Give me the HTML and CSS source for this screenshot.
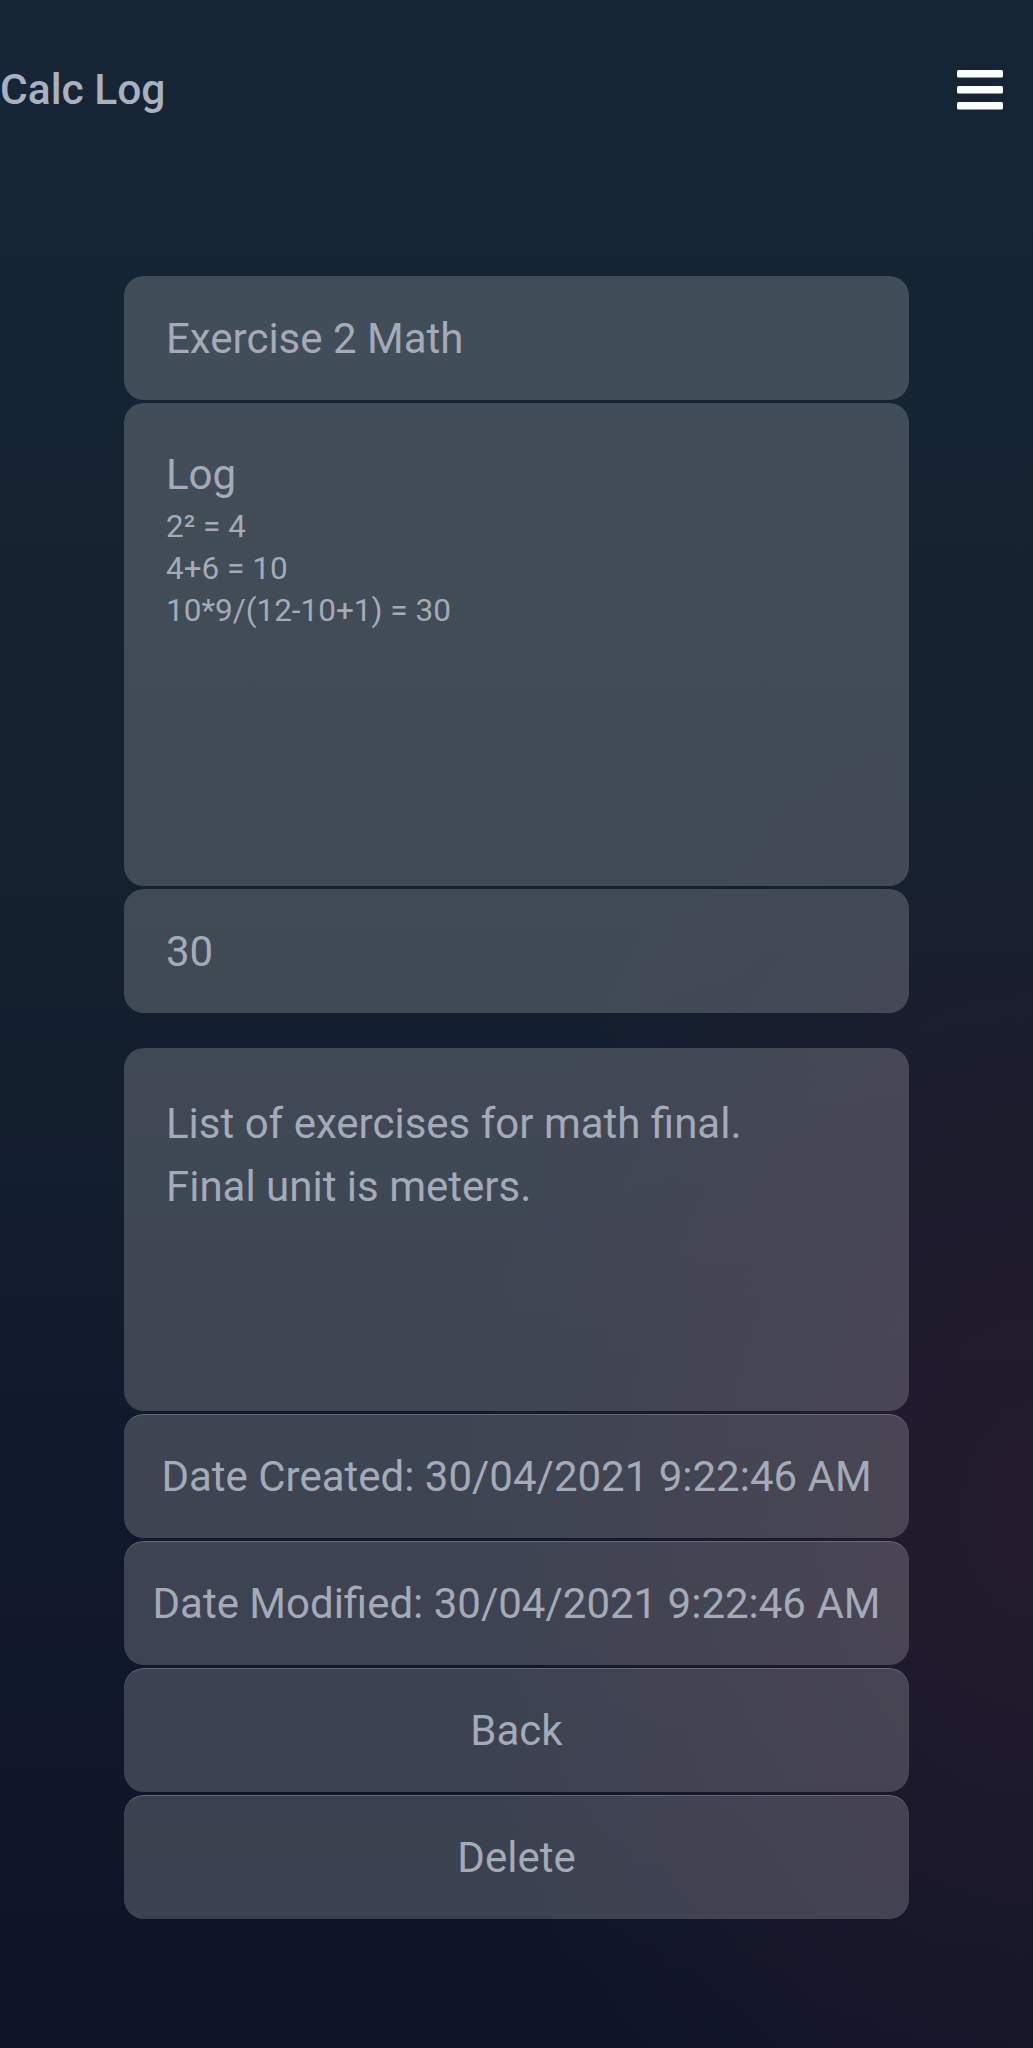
FILE: index.html
```html
<!DOCTYPE html>
<html lang="en">
<head>
<meta charset="utf-8">
<title>Calc Log</title>
<link rel="stylesheet" href="styles.css">
</head>
<body>
<header class="topbar">
  <h1 class="brand">Calc Log</h1>
  <button class="menu-btn" aria-label="Menu">
    <svg width="46" height="40" viewBox="0 0 46 40">
      <rect x="0" y="0" width="46" height="7.5" rx="1.5" fill="#ffffff"/>
      <rect x="0" y="16" width="46" height="7.5" rx="1.5" fill="#ffffff"/>
      <rect x="0" y="32" width="46" height="7.5" rx="1.5" fill="#ffffff"/>
    </svg>
  </button>
</header>
<main class="entry">
  <section class="group">
    <div class="card card-line">Exercise 2 Math</div>
    <div class="card card-log">
      <div class="log-label">Log</div>
      <div class="log-line">2² = 4</div>
      <div class="log-line">4+6 = 10</div>
      <div class="log-line">10*9/(12-10+1) = 30</div>
    </div>
    <div class="card card-line">30</div>
  </section>
  <section class="group group-lower">
    <div class="card card-notes">
      <div>List of exercises for math final.</div>
      <div>Final unit is meters.</div>
    </div>
    <div class="card card-line card-center card-edge">Date Created: 30/04/2021 9:22:46 AM</div>
    <div class="card card-line card-center card-edge">Date Modified: 30/04/2021 9:22:46 AM</div>
    <button class="card card-line card-center card-edge btn">Back</button>
    <button class="card card-line card-center card-edge btn">Delete</button>
  </section>
</main>
</body>
</html>
```
FILE: styles.css
```css
* {
  box-sizing: border-box;
}

html, body {
  margin: 0;
  padding: 0;
}

body {
  min-height: 2048px;
  font-family: Roboto, "Noto Sans", sans-serif;
  color: #a4aab7;
  background:
    radial-gradient(ellipse 55% 40% at 100% 74%, rgba(40, 27, 46, 0.85), rgba(40, 27, 46, 0) 100%),
    linear-gradient(180deg, #162636 0%, #15222f 40%, #111a2c 70%, #0e1427 100%);
}

.topbar {
  display: flex;
  justify-content: space-between;
  align-items: center;
  padding: 66px 30px 0 0;
  height: 114px;
}

.brand {
  margin: 0;
  font-size: 42.5px;
  line-height: 48px;
  font-weight: 500;
  color: #a9b1be;
}

.menu-btn {
  background: none;
  border: 0;
  padding: 0;
  width: 46px;
  height: 40px;
  display: block;
}

.menu-btn svg {
  display: block;
}

.entry {
  width: 785px;
  margin: 162px auto 0;
}

.group {
  display: flex;
  flex-direction: column;
  gap: 3px;
}

.group-lower {
  margin-top: 35px;
}

.card {
  background: rgba(255, 255, 255, 0.19);
  border-radius: 20px;
  padding: 0 42px;
  color: #a4aab7;
  font-family: Roboto, "Noto Sans", sans-serif;
  font-size: 42px;
}

.card-line {
  height: 124px;
  display: flex;
  align-items: center;
}

.card-center {
  justify-content: center;
  padding: 0 10px;
  white-space: nowrap;
}

.card-edge {
  border: 0;
  border-top: 1.5px solid rgba(255, 255, 255, 0.2);
}

.btn {
  width: 100%;
  cursor: pointer;
}

.card-log {
  height: 483px;
  padding-top: 40px;
}

.log-label {
  font-size: 42px;
  line-height: 63px;
}

.log-line {
  font-size: 31.5px;
  line-height: 42px;
}

.card-notes {
  height: 363px;
  padding-top: 44px;
  font-size: 42px;
  line-height: 63px;
}
```
